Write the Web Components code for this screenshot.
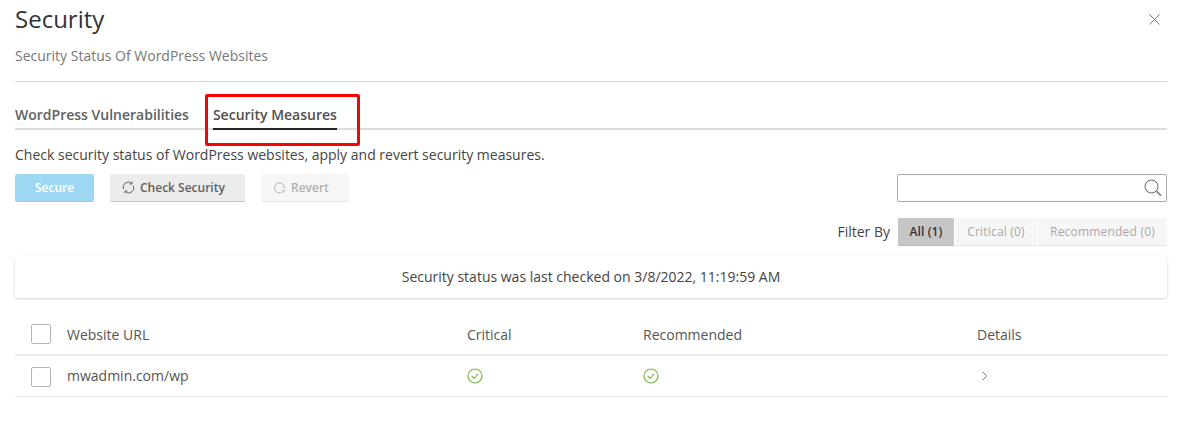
<!DOCTYPE html>
<html><head><meta charset="utf-8">
<style>
html,body{margin:0;padding:0;background:#fff}
body{font-family:"Open Sans",sans-serif;color:#444;position:relative;height:426px;overflow:hidden}
</style></head>
<body>
<security-panel></security-panel>
<script>
const ICONS={
 close:'<svg width="11" height="11" viewBox="0 0 11 11"><path d="M.5.5l10 10M10.5.5l-10 10" stroke="#777" stroke-width="1" fill="none"/></svg>',
 refresh:c=>`<svg width="13" height="13" viewBox="0 0 13 13" fill="none" stroke="${c}" stroke-width="1"><path d="M1.6 8.2A5 5 0 0 1 9.6 2.5"/><path d="M11.4 4.8A5 5 0 0 1 3.4 10.5"/><path d="M10 .6v2.4H7.6M3 12.4V10h2.4"/></svg>`,
 revert:c=>`<svg width="13" height="13" viewBox="0 0 13 13" fill="none" stroke="${c}" stroke-width="1"><path d="M9.5 10.8A5 5 0 1 1 11.4 7.5"/><path d="M9 9.5h2.2v2"/></svg>`,
 search:'<svg width="18" height="18" viewBox="0 0 18 18" fill="none" stroke="#666" stroke-width="1"><circle cx="7.5" cy="7.5" r="6.5"/><path d="M12 12.5l4.5 4.5M12.9 11.9l4.2 4.2" stroke-linecap="round"/></svg>',
 check:'<svg width="16" height="16" viewBox="0 0 16 16" fill="none" stroke="#7fb03c" stroke-width="1.1"><circle cx="8" cy="8" r="7"/><path d="M4.8 8l2.3 2.4 4.1-4.6"/></svg>',
 chev:'<svg width="6" height="10" viewBox="0 0 6 10" fill="none" stroke="#777" stroke-width="1"><path d="M.8 1l4 4-4 4"/></svg>'
};
function def(name,css,html){
 customElements.define(name,class extends HTMLElement{
  constructor(){super();const r=this.attachShadow({mode:'open'});r.innerHTML=`<style>${css}</style>${html}`;}
 });
}
def('x-button',`:host{display:inline-flex;height:28px;box-sizing:border-box;align-items:center;justify-content:flex-start;padding-left:12px;gap:5px;font-size:12px;font-weight:600;border-radius:2px;background:#ececec;color:#606060;border-bottom:1px solid #c4c4c4}
:host([kind=primary]){background:#9fd8f3;color:#fff;border-bottom-color:#93cfeb;justify-content:center;padding-left:0}
:host([kind=muted]){background:#f6f6f6;color:#b0b0b0;border-bottom-color:#e6e6e6}`,`<slot name="icon"></slot><slot></slot>`);
def('x-check',`:host{display:block;width:20px;height:20px;box-sizing:border-box;border:1px solid #b5b5b5;border-radius:2px;background:#fff}`,'');
def('x-filter',`:host{display:flex;align-items:center;justify-content:center;height:28px;box-sizing:border-box;font-size:12px;letter-spacing:.2px;background:#f6f6f6;color:#a8a8a8;border-bottom:1px solid #e6e6e6}
:host([active]){background:#c6c6c6;color:#333;border-bottom-color:#b8b8b8;font-weight:600;letter-spacing:.1px}`,`<slot></slot>`);
def('security-panel',`
:host{display:block;box-sizing:border-box;width:1179px;padding:0 12px 0 15px}
*{box-sizing:border-box}
.head{height:82px;border-bottom:1px solid #d6d6d6;position:relative}
h1{margin:0;font-size:24px;font-weight:400;line-height:33px;padding-top:2px;color:#333;height:36px}
.sub{font-size:14px;line-height:19px;margin-top:10px;color:#777}
.close{position:absolute;right:7px;top:14px;display:block;line-height:0}
.tabs{display:flex;gap:24px;height:48px;border-bottom:2px solid #dcdcdc;padding-top:23px}
.tab{font-size:14px;font-weight:600;line-height:19px;height:25px;color:#606060}
.tab.on{color:#505050;border-bottom:2px solid #222}
.desc{font-size:14px;line-height:19px;margin-top:15px;color:#444}
.bar{display:flex;align-items:center;margin-top:10px;height:28px}
.search{margin-left:auto;width:270px;height:28px;border:1px solid #aaa;border-radius:2px;display:flex;align-items:center;justify-content:flex-end;padding-right:4px}
.filters{display:flex;justify-content:flex-end;align-items:center;margin-top:16px;gap:1px;height:28px}
.flabel{font-size:14px;margin-right:7px;color:#444;position:relative;top:-1px}
.card{margin-top:10px;height:42px;padding-bottom:1px;border-radius:4px;box-shadow:0 1px 3px rgba(0,0,0,.18);display:flex;align-items:center;justify-content:center;font-size:14px;color:#444}
.row{display:grid;grid-template-columns:52px 400px 176px 334px 1fr;align-items:center;font-size:14px;color:#555}
.row>:first-child{margin-left:16px}
.thead{margin-top:16px;height:42px;border-bottom:2px solid #ececec}
.tbody{height:41px;border-bottom:1px solid #ececec}
.ic{display:flex;line-height:0}
.ic.d{padding-left:5px}
.tbody .url{margin-top:-2px}
.tbody x-check{margin-top:1px}
.mark{position:absolute;left:205px;top:94px;width:155px;height:52px;border:3px solid #f00;border-radius:2px}
`,`
<div class="head"><h1>Security</h1><div class="sub">Security Status Of WordPress Websites</div><span class="close">${ICONS.close}</span></div>
<div class="tabs"><div class="tab">WordPress Vulnerabilities</div><div class="tab on">Security Measures</div></div>
<div class="desc">Check security status of WordPress websites, apply and revert security measures.</div>
<div class="bar">
 <x-button kind="primary" style="width:79px">Secure</x-button>
 <x-button style="width:135px;margin-left:16px"><span slot="icon" style="line-height:0">${ICONS.refresh('#666')}</span>Check Security</x-button>
 <x-button kind="muted" style="width:88px;margin-left:16px"><span slot="icon" style="line-height:0">${ICONS.revert('#b5b5b5')}</span>Revert</x-button>
 <div class="search">${ICONS.search}</div>
</div>
<div class="filters"><span class="flabel">Filter By</span>
 <x-filter active style="width:56px">All (1)</x-filter>
 <x-filter style="width:82px">Critical (0)</x-filter>
 <x-filter style="width:129px">Recommended (0)</x-filter>
</div>
<div class="card">Security status was last checked on 3/8/2022, 11:19:59 AM</div>
<div class="row thead"><x-check></x-check><div>Website URL</div><div>Critical</div><div>Recommended</div><div>Details</div></div>
<div class="row tbody"><x-check></x-check><div class="url">mwadmin.com/wp</div><div class="ic">${ICONS.check}</div><div class="ic">${ICONS.check}</div><div class="ic d">${ICONS.chev}</div></div>
<div class="mark"></div>
`);
</script>
</body></html>
